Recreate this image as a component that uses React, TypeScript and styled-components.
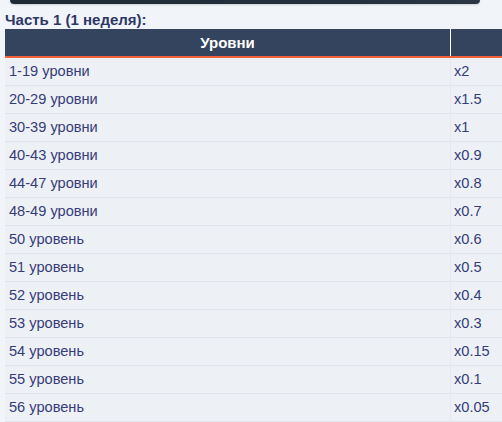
import React from "react";
import styled, { createGlobalStyle } from "styled-components";

const Global = createGlobalStyle`
  html, body { margin: 0; padding: 0; background: #f1f4f8; }
  body { font-family: "Liberation Sans", Arial, sans-serif; overflow: hidden; }
`;

const Page = styled.div`
  width: 502px;
  height: 422px;
  overflow: hidden;
  display: flex;
  flex-direction: column;
`;

const TopBar = styled.div`
  height: 4px;
  margin: 0 22px 0 10px;
  border-radius: 0 0 4px 4px;
  background: linear-gradient(90deg, #1e2a36 0%, #24303d 70%, #2a3644 100%);
  box-shadow: 0 1px 2px rgba(0, 0, 0, 0.15);
`;

const Title = styled.div`
  margin: 6px 0 0 5px;
  height: 19px;
  font-size: 15px;
  font-weight: bold;
  color: #2c3766;
  line-height: 19px;
`;

const Table = styled.table`
  margin-left: 5px;
  width: 510px;
  border-collapse: collapse;
  table-layout: fixed;
`;

const HeadCell = styled.th<{ $w: number }>`
  width: ${(p) => p.$w}px;
  height: 27px;
  padding: 0;
  background: #34445e;
  color: #ffffff;
  font-size: 15px;
  font-weight: bold;
  text-align: center;
  border-bottom: 2px solid #f2603c;
  border-right: 1px solid #ffffff;
  &:last-child { border-right: none; }
`;

const Row = styled.tr`
  height: 28px;
  background: #edf1f6;
  border-bottom: 1px solid #e1e5eb;
`;

const Cell = styled.td<{ $pad: number }>`
  padding: 0 0 0 ${(p) => p.$pad}px;
  font-size: 14.6px;
  color: #363c78;
  white-space: nowrap;
  border-right: 1px solid #e4e8ee;
  &:last-child { border-right: none; }
`;

const data: [string, string][] = [
  ["1-19 уровни", "x2"],
  ["20-29 уровни", "x1.5"],
  ["30-39 уровни", "x1"],
  ["40-43 уровни", "x0.9"],
  ["44-47 уровни", "x0.8"],
  ["48-49 уровни", "x0.7"],
  ["50 уровень", "x0.6"],
  ["51 уровень", "x0.5"],
  ["52 уровень", "x0.4"],
  ["53 уровень", "x0.3"],
  ["54 уровень", "x0.15"],
  ["55 уровень", "x0.1"],
  ["56 уровень", "x0.05"],
];

export default function App() {
  return (
    <Page>
      <Global />
      <TopBar />
      <Title>Часть 1 (1 неделя):</Title>
      <Table>
        <thead>
          <tr>
            <HeadCell $w={445}>Уровни</HeadCell>
            <HeadCell $w={65}></HeadCell>
          </tr>
        </thead>
        <tbody>
          {data.map(([a, b]) => (
            <Row key={a}>
              <Cell $pad={4}>{a}</Cell>
              <Cell $pad={3}>{b}</Cell>
            </Row>
          ))}
        </tbody>
      </Table>
    </Page>
  );
}
